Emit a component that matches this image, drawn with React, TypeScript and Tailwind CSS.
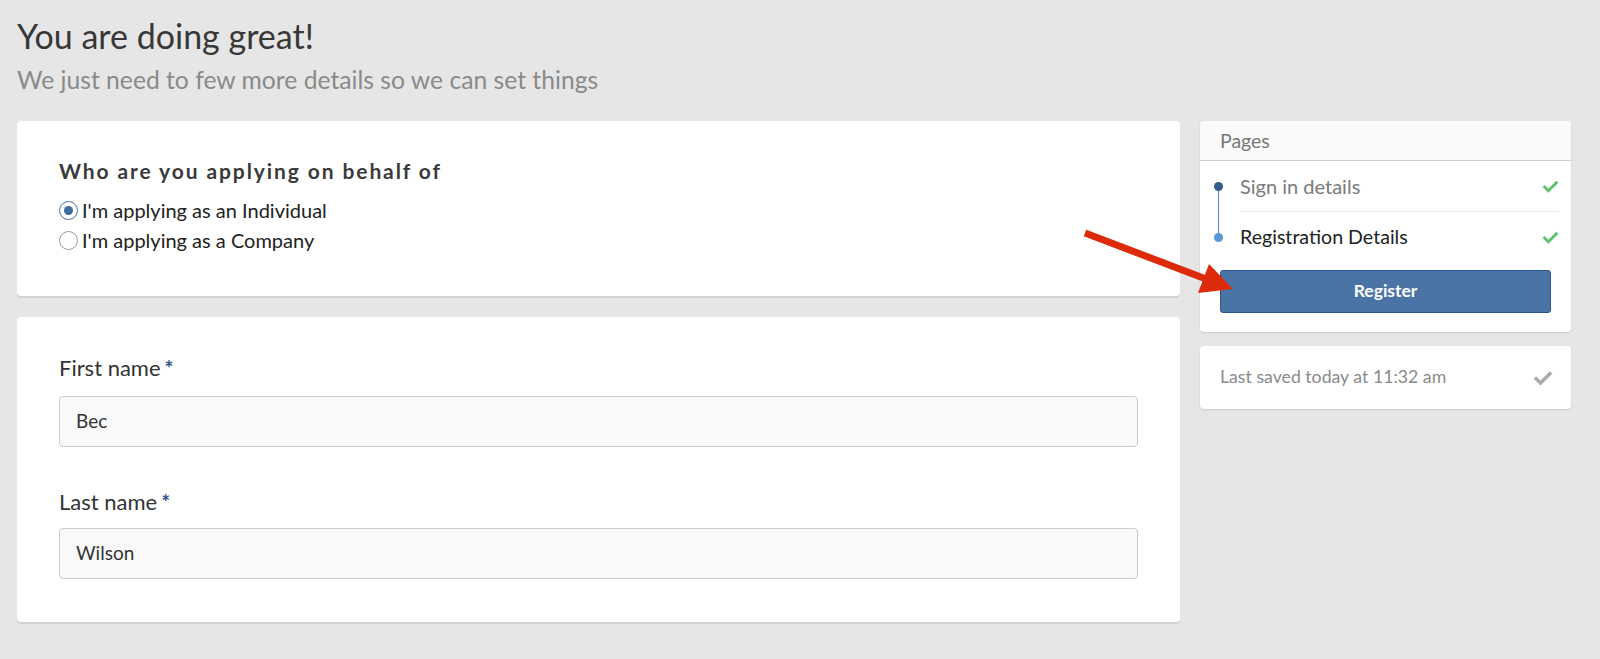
import React from "react";

function Check({ className }: { className: string }) {
  return (
    <svg viewBox="0 0 16 16" className={className} fill="none">
      <path d="M2.5 8.5l3.5 3.5 7.5-7.5" stroke="currentColor" strokeWidth="2.8" strokeLinecap="square" />
    </svg>
  );
}

export default function App() {
  const font = { fontFamily: "Lato, 'Open Sans', sans-serif" };
  return (
    <div className="relative min-h-[659px] w-[1600px] bg-[#e6e6e6] text-[#333]" style={font}>
      <div className="px-[17px] pt-[16px]">
        <h1 className="text-[34px] leading-[40px] text-[#383838]">You are doing great!</h1>
        <p className="mt-[9px] text-[24.7px] leading-[30px] text-[#8a8a8a]">We just need to few more details so we can set things</p>
      </div>

      <div className="mt-[26px] flex items-start gap-[20px] px-[17px]">
        {/* Left column */}
        <div className="flex w-[1163px] flex-col gap-[21px]">
          <div className="rounded-[4px] bg-white px-[42px] pb-[43px] pt-[37px] shadow-[0_2px_0_#d2d2d2]">
            <h2 className="text-[21px] font-bold leading-[26px] tracking-[1.9px] text-[#3a3a3a]">Who are you applying on behalf of</h2>
            <div className="mt-[13px] flex flex-col gap-[4px]">
              <label className="flex h-[26px] items-center gap-[4px] text-[20px] text-[#222]">
                <span className="flex h-[19px] w-[19px] items-center justify-center rounded-full border border-[#4a74a5] bg-white">
                  <span className="h-[9px] w-[9px] rounded-full bg-[#3f6a9e]" />
                </span>
                I'm applying as an Individual
              </label>
              <label className="flex h-[26px] items-center gap-[4px] text-[20px] text-[#222]">
                <span className="h-[19px] w-[19px] rounded-full border border-[#9a9a9a] bg-white" />
                I'm applying as a Company
              </label>
            </div>
          </div>

          <div className="rounded-[4px] bg-white px-[42px] pb-[43px] pt-[38px] shadow-[0_2px_0_#d2d2d2]">
            <div className="flex flex-col">
              <div className="text-[22px] leading-[26px] text-[#333]">
                First name<span className="ml-[4px] text-[21px] font-bold text-[#2d5487]">*</span>
              </div>
              <div className="mt-[15px] flex h-[51px] items-center rounded-[4px] border border-[#cccccc] bg-[#f9f9f9] px-[16px] text-[19px] text-[#333]">
                Bec
              </div>
            </div>
            <div className="mt-[42px] flex flex-col">
              <div className="text-[22px] leading-[26px] text-[#333]">
                Last name<span className="ml-[4px] text-[21px] font-bold text-[#2d5487]">*</span>
              </div>
              <div className="mt-[13px] flex h-[51px] items-center rounded-[4px] border border-[#cccccc] bg-[#f9f9f9] px-[16px] text-[19px] text-[#333]">
                Wilson
              </div>
            </div>
          </div>
        </div>

        {/* Right column */}
        <div className="flex w-[371px] flex-col gap-[14px]">
          <div className="overflow-hidden rounded-[4px] bg-white shadow-[0_1px_2px_rgba(0,0,0,0.12)]">
            <div className="flex h-[40px] items-center border-b border-[#cfcfcf] bg-[#fafafa] px-[20px] text-[19.5px] text-[#777]">Pages</div>
            <div className="relative pl-[14px] pr-[12px]">
              <div className="absolute left-[18px] top-[26px] h-[50px] w-px bg-[#3d8ad6]" />
              <div className="flex h-[51px] items-center">
                <span className="relative z-10 h-[9px] w-[9px] rounded-full bg-[#36598a]" />
                <div className="ml-[17px] flex h-full flex-1 items-center justify-between border-b border-[#e8e8e8]">
                  <span className="text-[20px] text-[#7a7a7a]">Sign in details</span>
                  <Check className="h-[17px] w-[17px] text-[#5cc26c]" />
                </div>
              </div>
              <div className="flex h-[50px] items-center">
                <span className="relative z-10 h-[9px] w-[9px] rounded-full bg-[#5b97d4]" />
                <div className="ml-[17px] flex h-full flex-1 items-center justify-between">
                  <span className="text-[19.6px] text-[#222]">Registration Details</span>
                  <Check className="h-[17px] w-[17px] text-[#5cc26c]" />
                </div>
              </div>
            </div>
            <div className="px-[20px] pb-[19px] pt-[8px]">
              <button className="flex h-[43px] w-full items-center justify-center rounded-[3px] border border-[#2b578f] bg-[#4a74a5] text-[17.5px] font-bold text-white">
                Register
              </button>
            </div>
          </div>

          <div className="flex h-[63px] items-center justify-between rounded-[4px] bg-white pl-[20px] pr-[18px] shadow-[0_1px_2px_rgba(0,0,0,0.12)]">
            <span className="text-[17.7px] text-[#8a8a8a]">Last saved today at 11:32 am</span>
            <Check className="h-[20px] w-[20px] text-[#aaaaaa]" />
          </div>
        </div>
      </div>

      {/* Red arrow overlay */}
      <svg className="pointer-events-none absolute left-0 top-0" width="1600" height="659">
        <line x1="1085" y1="233" x2="1206" y2="279" stroke="#dd2a0a" strokeWidth="7" />
        <polygon points="1233,289 1198,293 1209,264" fill="#dd2a0a" />
      </svg>
    </div>
  );
}
